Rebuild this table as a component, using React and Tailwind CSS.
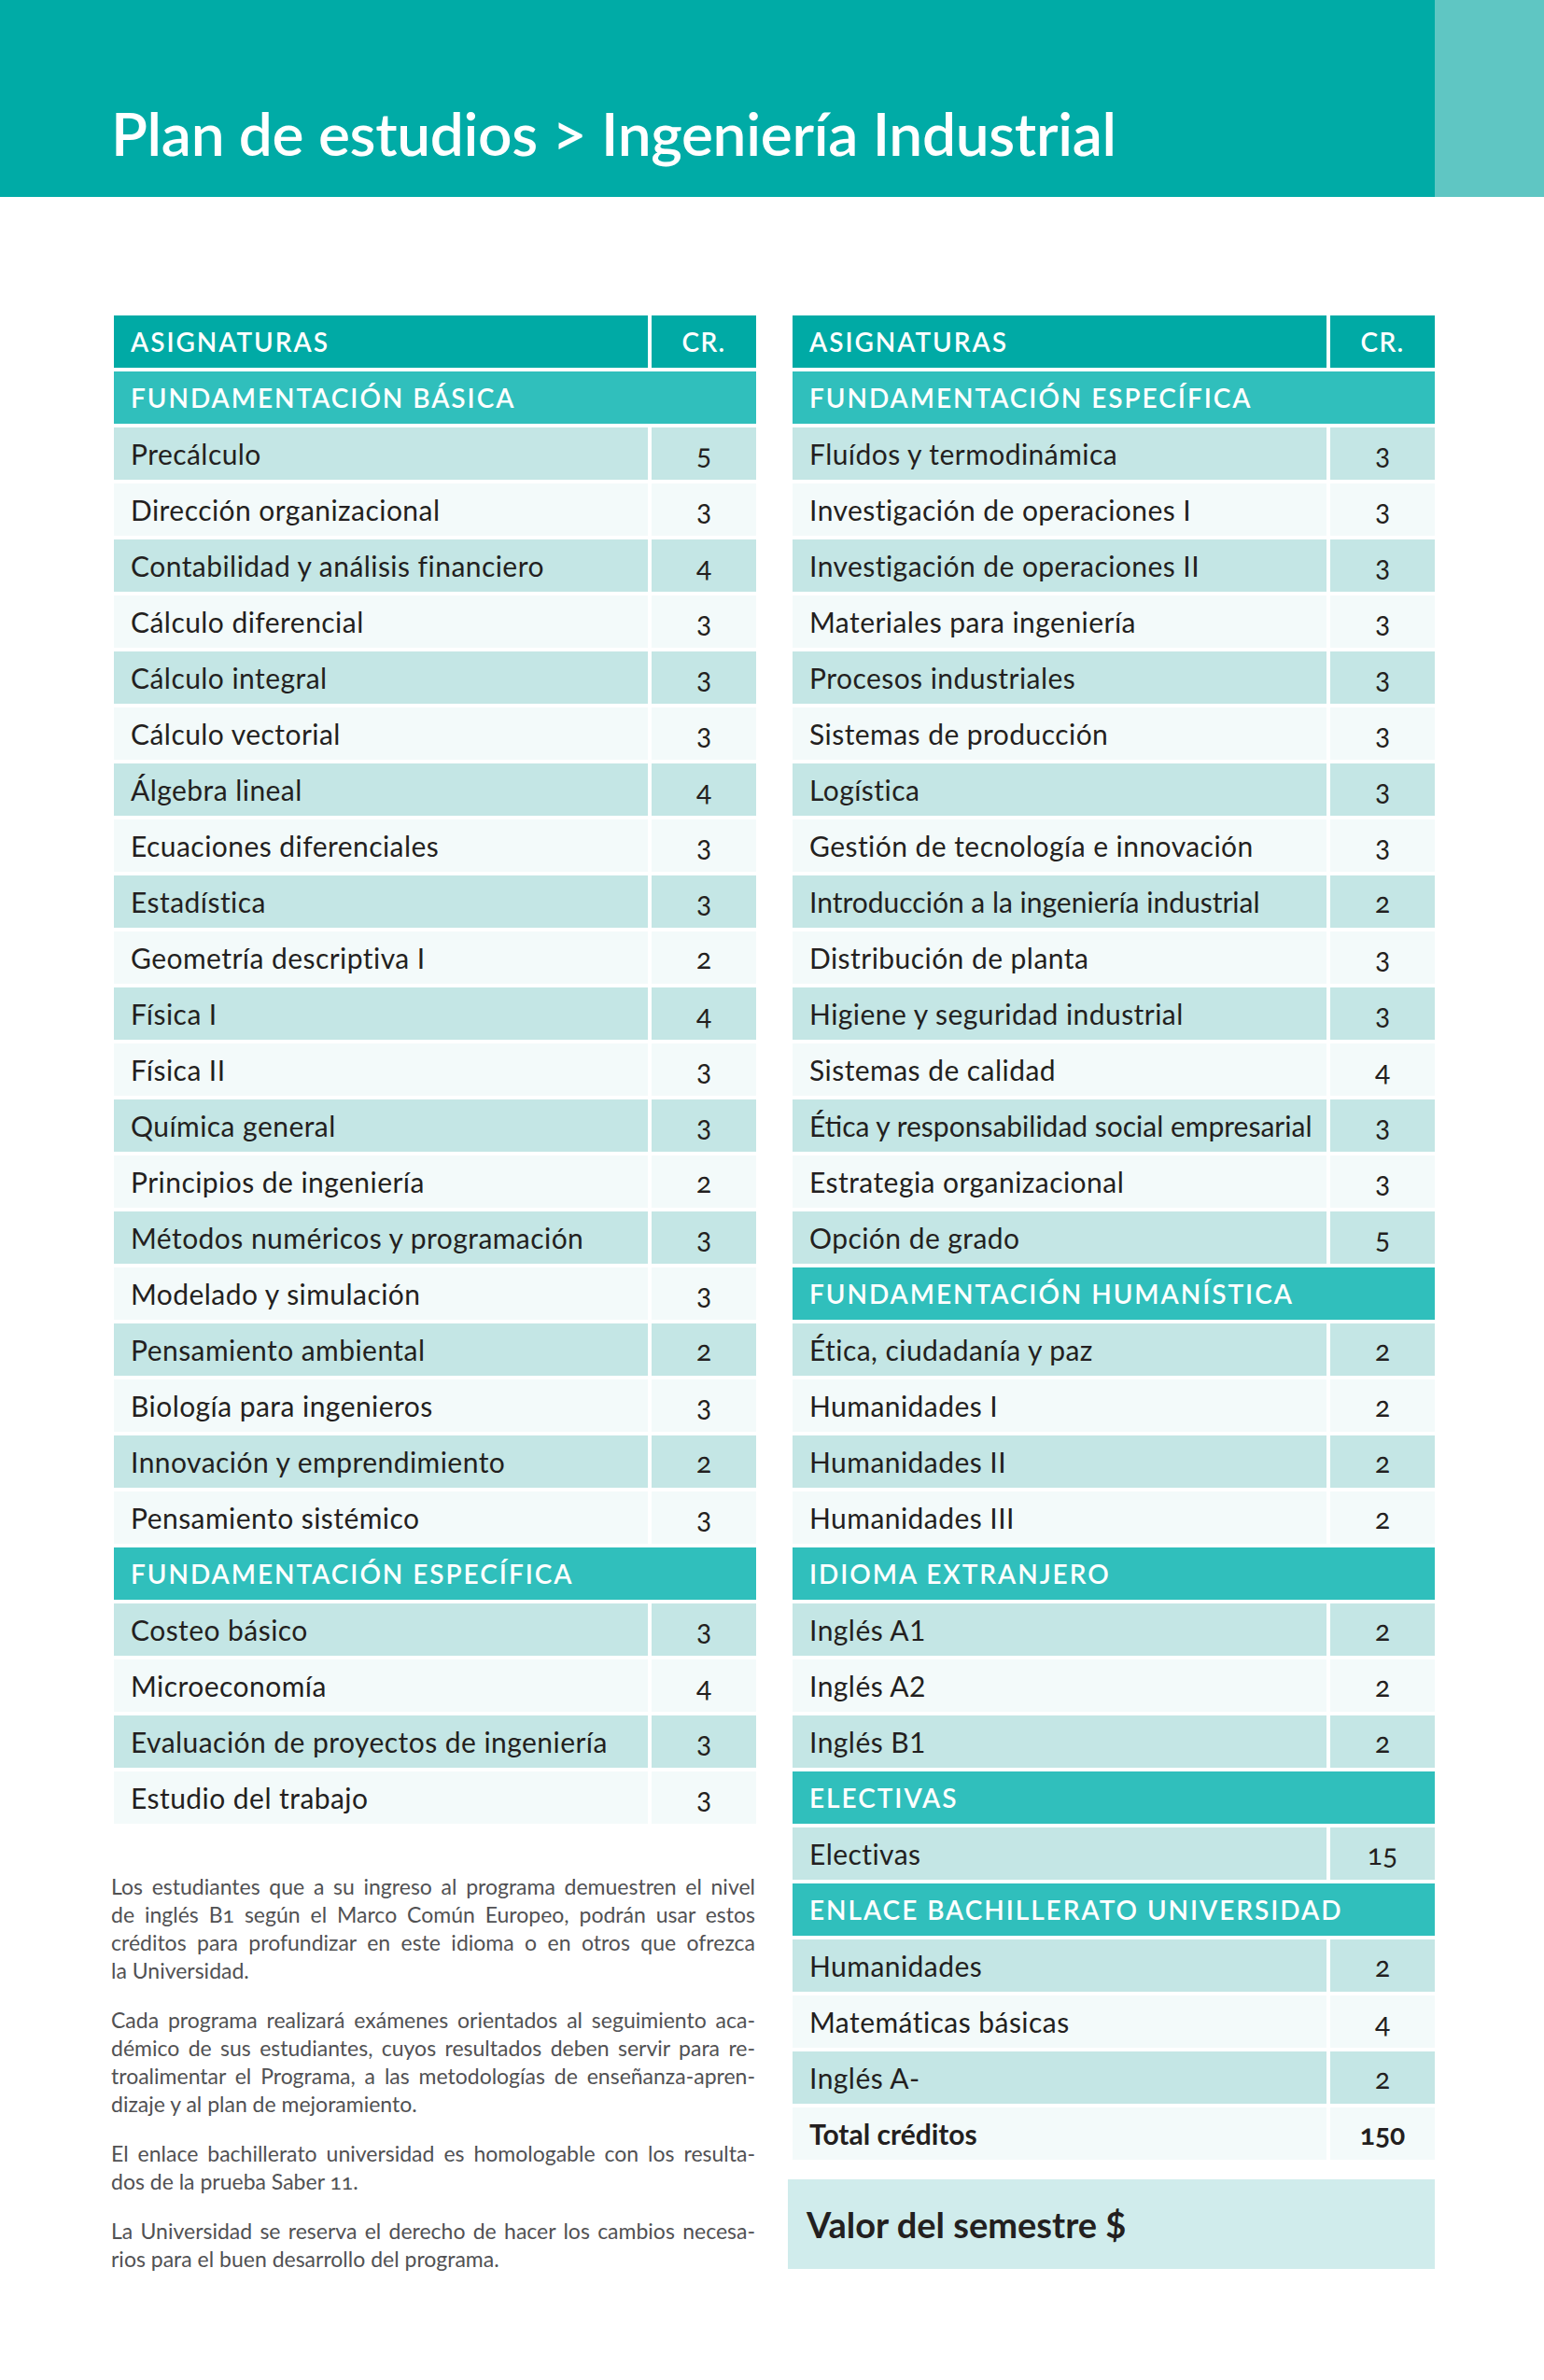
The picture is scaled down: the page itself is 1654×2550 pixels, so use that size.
import React from "react";

const LEFT = [
  { section: "FUNDAMENTACIÓN BÁSICA" },
  ["Precálculo", "5"],
  ["Dirección organizacional", "3"],
  ["Contabilidad y análisis financiero", "4"],
  ["Cálculo diferencial", "3"],
  ["Cálculo integral", "3"],
  ["Cálculo vectorial", "3"],
  ["Álgebra lineal", "4"],
  ["Ecuaciones diferenciales", "3"],
  ["Estadística", "3"],
  ["Geometría descriptiva I", "2"],
  ["Física I", "4"],
  ["Física II", "3"],
  ["Química general", "3"],
  ["Principios de ingeniería", "2"],
  ["Métodos numéricos y programación", "3"],
  ["Modelado y simulación", "3"],
  ["Pensamiento ambiental", "2"],
  ["Biología para ingenieros", "3"],
  ["Innovación y emprendimiento", "2"],
  ["Pensamiento sistémico", "3"],
  { section: "FUNDAMENTACIÓN ESPECÍFICA" },
  ["Costeo básico", "3"],
  ["Microeconomía", "4"],
  ["Evaluación de proyectos de ingeniería", "3"],
  ["Estudio del trabajo", "3"],
];

const RIGHT = [
  { section: "FUNDAMENTACIÓN ESPECÍFICA" },
  ["Fluídos y termodinámica", "3"],
  ["Investigación de operaciones I", "3"],
  ["Investigación de operaciones II", "3"],
  ["Materiales para ingeniería", "3"],
  ["Procesos industriales", "3"],
  ["Sistemas de producción", "3"],
  ["Logística", "3"],
  ["Gestión de tecnología e innovación", "3"],
  ["Introducción a la ingeniería industrial", "2"],
  ["Distribución de planta", "3"],
  ["Higiene y seguridad industrial", "3"],
  ["Sistemas de calidad", "4"],
  ["Ética y responsabilidad social empresarial", "3"],
  ["Estrategia organizacional", "3"],
  ["Opción de grado", "5"],
  { section: "FUNDAMENTACIÓN HUMANÍSTICA" },
  ["Ética, ciudadanía y paz", "2"],
  ["Humanidades I", "2"],
  ["Humanidades II", "2"],
  ["Humanidades III", "2"],
  { section: "IDIOMA EXTRANJERO" },
  ["Inglés A1", "2"],
  ["Inglés A2", "2"],
  ["Inglés B1", "2"],
  { section: "ELECTIVAS" },
  ["Electivas", "15"],
  { section: "ENLACE BACHILLERATO UNIVERSIDAD" },
  ["Humanidades", "2"],
  ["Matemáticas básicas", "4"],
  ["Inglés A-", "2"],
  ["Total créditos", "150", true],
];

const NOTES = [
  [
    "Los estudiantes que a su ingreso al programa demuestren el nivel",
    "de inglés B1 según el Marco Común Europeo, podrán usar estos",
    "créditos para profundizar en este idioma o en otros que ofrezca",
    "la Universidad.",
  ],
  [
    "Cada programa realizará exámenes orientados al seguimiento aca-",
    "démico de sus estudiantes, cuyos resultados deben servir para re-",
    "troalimentar el Programa, a las metodologías de enseñanza-apren-",
    "dizaje y al plan de mejoramiento.",
  ],
  [
    "El enlace bachillerato universidad es homologable con los resulta-",
    "dos de la prueba Saber 11.",
  ],
  [
    "La Universidad se reserva el derecho de hacer los cambios necesa-",
    "rios para el buen desarrollo del programa.",
  ],
];

function Table({ rows }) {
  let idx = 0;
  return (
    <div className="grid grid-cols-[1fr_112px] gap-x-[4px] gap-y-[4px]">
      <div className="h-[56px] bg-[#00aaa5] flex items-center pl-[18px] text-white font-semibold text-[28px] tracking-[0.07em]">
        ASIGNATURAS
      </div>
      <div className="h-[56px] bg-[#00aaa5] flex items-center justify-center text-white font-semibold text-[28px] tracking-[0.05em]">
        CR.
      </div>
      {rows.map((r, i) => {
        if (r.section) {
          idx = 0;
          return (
            <div
              key={i}
              className="col-span-2 h-[56px] bg-[#30bfbc] flex items-center pl-[18px] text-white font-semibold text-[28px] tracking-[0.07em]"
            >
              {r.section}
            </div>
          );
        }
        const dark = idx % 2 === 0;
        idx++;
        const bg = dark ? "bg-[#c4e6e5]" : "bg-[#f3fafa]";
        return (
          <React.Fragment key={i}>
            <div
              className={`h-[56px] ${bg} flex items-center pl-[18px] text-[30px] whitespace-nowrap text-[#231f20] ${r[2] ? "font-bold" : r[0].length > 38 ? "tracking-normal" : "tracking-[0.015em]"}`}
            >
              {r[0]}
            </div>
            <div
              className={`h-[56px] ${bg} flex items-center justify-center text-[30px] text-[#231f20] [font-feature-settings:'onum'] ${r[2] ? "font-bold" : ""}`}
            >
              {r[1]}
            </div>
          </React.Fragment>
        );
      })}
    </div>
  );
}

export default function App() {
  return (
    <div className="w-[1654px] h-[2550px] bg-white font-['Lato',sans-serif] overflow-hidden">
      <header className="flex h-[211px]">
        <div className="flex-1 bg-[#00aba6] flex items-end pb-[36px] pl-[119px]">
          <h1 className="text-white font-semibold text-[64px] leading-none tracking-[-0.005em]">
            Plan de estudios &gt; Ingeniería Industrial
          </h1>
        </div>
        <div className="w-[117px] bg-[#5fc6c3]" />
      </header>

      <main className="flex gap-[39px] pt-[127px] pl-[122px]">
        <div className="w-[688px]">
          <Table rows={LEFT} />
          <div className="mt-[52px] -ml-[3px] w-[690px] text-[23px] leading-[30px] text-[#515153] [font-feature-settings:'onum']">
            {NOTES.map((p, i) => (
              <div key={i} className="mb-[23px]">
                {p.map((line, j) => (
                  <div
                    key={j}
                    className={
                      j < p.length - 1
                        ? "text-justify [text-align-last:justify] whitespace-nowrap"
                        : "whitespace-nowrap"
                    }
                  >
                    {line}
                  </div>
                ))}
              </div>
            ))}
          </div>
        </div>

        <div className="w-[688px]">
          <Table rows={RIGHT} />
          <div className="mt-[21px] -ml-[5px] w-[693px] h-[96px] bg-[#d0ecec] flex items-center pl-[20px]">
            <span className="text-[38px] font-bold text-[#231f20]">
              Valor del semestre $
            </span>
          </div>
        </div>
      </main>
    </div>
  );
}
